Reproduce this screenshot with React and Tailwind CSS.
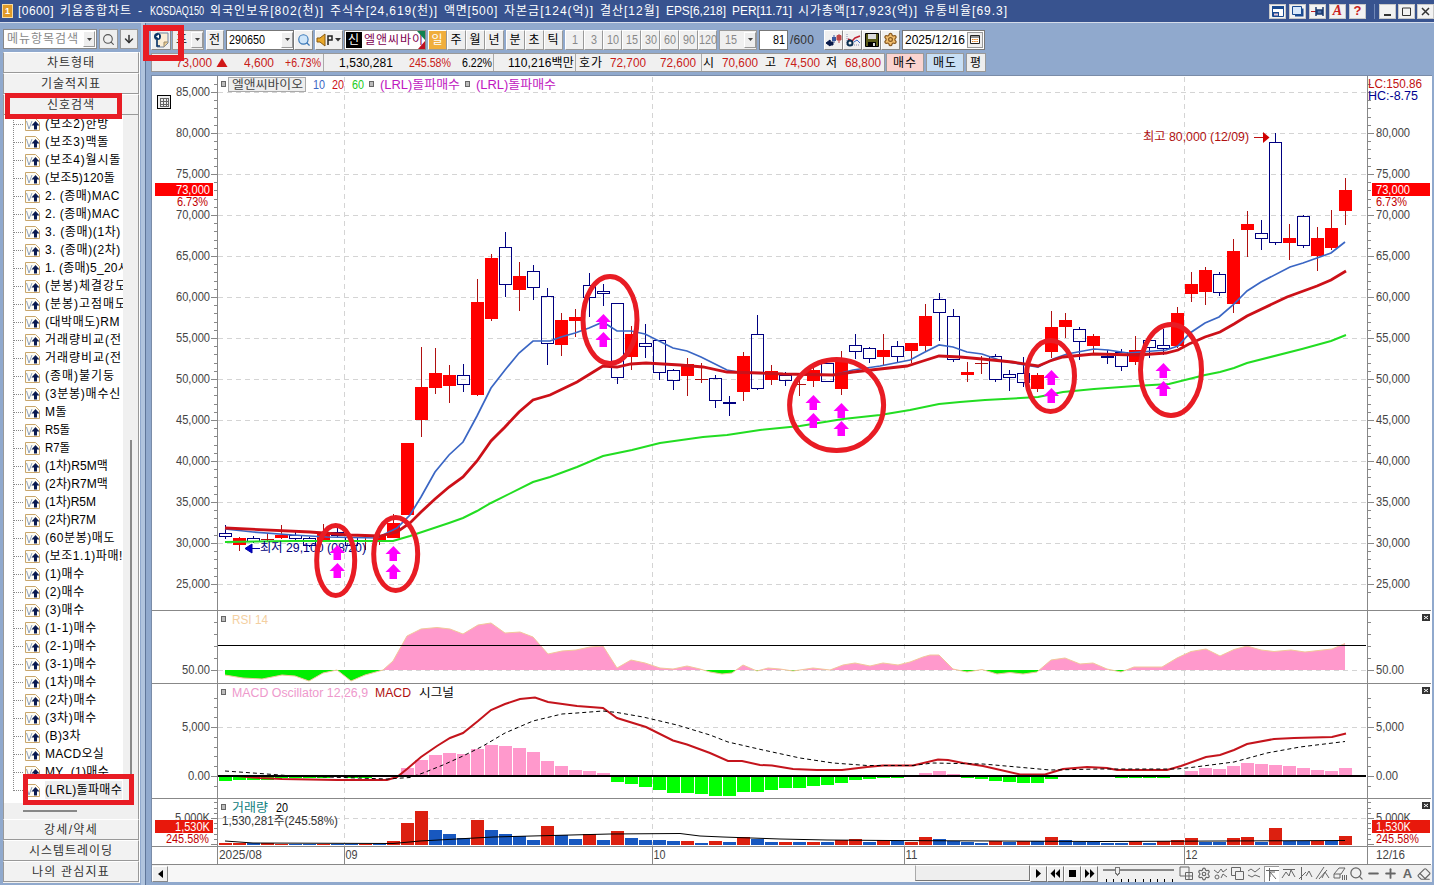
import React, { useLayoutEffect, useRef } from 'react';
import { Search, ArrowDown, Settings, Minus, Plus, Eraser } from 'lucide-react';

const FONT = "font-['Liberation_Sans','Noto_Sans_CJK_KR',sans-serif]";

// fixed pitch: 12px for hangul, 6px for everything else
const gridWidth = (text) => [...text].reduce((sum, c) => sum + (c > '\u1100' ? 12 : 6), 0);

const NARROW = { '(': 5, ')': 5, '.': 4, ',': 4, ' ': 4, '!': 4, M: 10, A: 8, B: 8, C: 9, D: 8, R: 7, L: 6, Y: 8 };
const listWidth = (text) => [...text].reduce((sum, c) => sum + (c > '\u1100' ? 12 : NARROW[c] || 6), 0);

// Makes the text take exactly `width` pixels: letters are spread when there is room, squeezed when not
const Fit = ({ text, width = gridWidth(text), className = '' }) => {
  const ref = useRef(null);
  useLayoutEffect(() => {
    const el = ref.current;
    el.style.letterSpacing = '0px';
    el.style.transform = 'none';
    el.style.width = 'auto';
    const natural = el.getBoundingClientRect().width;
    if (natural > width) {
      el.style.transform = `scaleX(${width / natural})`;
      el.style.marginRight = `${width - natural}px`;
    } else {
      el.style.letterSpacing = `${(width - natural) / [...text].length}px`;
    }
  }, [text, width]);
  return <span ref={ref} className={`inline-block shrink-0 origin-left whitespace-pre ${className}`}>{text}</span>;
};

const TITLE = '[0600] 키움종합차트 - KOSDAQ150 외국인보유[802(천)] 주식수[24,619(천)] 액면[500] 자본금[124(억)] 결산[12월] EPS[6,218] PER[11.71] 시가총액[17,923(억)] 유통비율[69.3]';

const SIGNALS = [
  '(보조2)한방', '(보조3)맥돌', '(보조4)월시돌', '(보조5)120돌', '2. (종매)MAC', '2. (종매)MAC',
  '3. (종매)(1차)', '3. (종매)(2차)', '1. (종매)5_20시', '(분봉)체결강도', '(분봉)고점매도', '(대박매도)RM',
  '거래량비교(전', '거래량비교(전', '(종매)불기둥', '(3분봉)매수신', 'M돌', 'R5돌', 'R7돌', '(1차)R5M맥',
  '(2차)R7M맥', '(1차)R5M', '(2차)R7M', '(60분봉)매도', '(보조1.1)파매!', '(1)매수', '(2)매수', '(3)매수',
  '(1-1)매수', '(2-1)매수', '(3-1)매수', '(1차)매수', '(2차)매수', '(3차)매수', '(B)3차', 'MACD오실',
  'MY_(1)매수', '(LRL)돌파매수',
];

// [up/down, high, body top, body bottom, low] in chart pixels
const CANDLES = [
  ['b', 525, 533, 536, 539], ['r', 537, 538, 545, 551], ['b', 536, 538, 541, 543], ['r', 533, 539, 540, 541],
  ['r', 525, 535, 538, 539], ['b', 532, 535, 538, 541], ['b', 537, 538, 545, 547], ['r', 524, 533, 542, 542],
  ['b', 528, 532, 535, 537], ['b', 535, 537, 545, 547], ['r', 537, 541, 542, 550], ['r', 533, 535, 541, 545],
  ['r', 514, 523, 538, 538], ['r', 443, 443, 515, 515], ['r', 347, 387, 420, 437], ['r', 348, 373, 388, 394],
  ['r', 365, 375, 386, 403], ['b', 364, 375, 384, 392], ['r', 279, 302, 395, 396], ['r', 254, 258, 319, 321],
  ['b', 232, 247, 284, 297], ['r', 262, 276, 290, 311], ['b', 265, 271, 287, 300], ['b', 288, 296, 343, 365],
  ['r', 313, 320, 345, 356], ['r', 309, 317, 321, 337], ['b', 273, 285, 297, 317], ['b', 284, 291, 293, 306],
  ['b', 303, 303, 377, 384], ['r', 326, 334, 357, 370], ['b', 324, 343, 346, 358], ['b', 340, 340, 372, 380],
  ['b', 369, 370, 380, 390], ['r', 358, 364, 376, 396], ['r', 363, 379, 380, 383], ['b', 375, 378, 400, 408],
  ['b', 396, 402, 403, 416], ['r', 352, 356, 392, 401], ['b', 315, 334, 388, 390], ['r', 365, 371, 380, 385],
  ['b', 372, 375, 380, 386], ['r', 377, 384, 385, 396], ['r', 368, 370, 381, 387], ['b', 363, 363, 381, 381],
  ['r', 351, 361, 389, 395], ['b', 334, 345, 351, 359], ['b', 347, 348, 358, 363], ['r', 334, 350, 357, 365],
  ['b', 341, 346, 356, 362], ['r', 343, 343, 351, 363], ['r', 304, 316, 346, 351], ['b', 293, 299, 312, 341],
  ['b', 309, 316, 359, 362], ['r', 362, 372, 375, 382], ['r', 356, 363, 364, 374], ['b', 354, 356, 379, 382],
  ['b', 370, 374, 377, 391], ['b', 357, 373, 382, 387], ['r', 373, 375, 389, 392], ['r', 311, 327, 352, 358],
  ['r', 313, 320, 327, 338], ['b', 327, 329, 341, 360], ['r', 334, 336, 346, 354], ['b', 350, 356, 357, 364],
  ['b', 349, 352, 366, 371], ['r', 336, 350, 362, 365], ['b', 340, 340, 347, 358], ['b', 329, 345, 348, 355],
  ['r', 307, 313, 346, 348], ['r', 272, 284, 294, 302], ['r', 267, 270, 292, 305], ['b', 272, 274, 292, 296],
  ['r', 239, 251, 304, 313], ['r', 211, 224, 230, 257], ['b', 220, 233, 238, 250], ['b', 133, 142, 242, 245],
  ['r', 224, 238, 243, 260], ['b', 215, 216, 245, 248], ['r', 227, 238, 256, 271], ['r', 210, 228, 248, 250],
  ['r', 178, 190, 211, 225],
];

const MA10 = '225,529 253,532 293,535 327,537 377,538 397,528 410,515 421,497 435,472 449,455 463,442 477,416 491,388 505,370 519,353 533,341 550,341 561,337 575,333 589,328 603,322 617,331 631,331 645,334 673,348 687,351 701,357 727,370 743,373 799,374 833,375 853,370 880,366 910,360 925,352 939,345 953,347 967,352 982,354 1002,361 1038,367 1053,359 1067,354 1094,349 1108,350 1128,353 1166,350 1178,346 1190,333 1205,323 1219,317 1233,305 1247,291 1261,282 1290,267 1303,263 1317,258 1331,253 1345,242';
const MA20 = '225,528 310,532 350,535 380,536 397,532 410,523 421,512 435,499 449,487 463,477 477,461 491,441 505,427 519,412 533,400 550,395 577,382 603,366 617,367 631,364 646,363 680,365 703,367 727,372 760,373 783,374 833,375 853,372 907,366 923,361 939,356 960,357 982,359 1012,362 1038,366 1050,361 1063,357 1094,354 1138,355 1166,353 1178,350 1189,344 1205,337 1220,332 1234,324 1247,316 1287,297 1317,286 1331,280 1346,271';
const MA60 = '225,542 293,541 393,541 410,536 449,523 463,518 477,511 491,503 533,482 550,477 577,467 603,456 632,450 660,443 703,437 727,435 760,430 800,426 843,419 880,415 910,410 939,404 960,402 985,400 1038,397 1063,392 1094,389 1135,386 1169,384 1205,375 1220,372 1234,368 1247,363 1302,349 1331,341 1346,335';

const RSI = '225,675 243,678 262,679 282,675 295,676 309,681 323,673 337,670 351,681 365,675 383,670 393,661 407,636 421,629 437,627.5 450,629 463,634 478,625 491,623 505,633 520,632 533,637 548,654 562,651 576,650 590,647 603,646 617,668 631,660 645,663 660,668 673,669 687,666 700,669 710,672 722,674 732,673 743,665 757,671 768,668 780,669 793,671 813,668 830,670 843,665 855,663 870,666 883,663 898,665 910,662 923,657 930,655 939,655 953,669 967,672 982,669.5 997,674 1010,672.5 1023,674 1037,672 1051,660 1065,658 1080,664 1093,663 1107,669 1121,672 1134,667 1162,667 1177,658 1191,651.5 1206,649 1220,656 1234,649.5 1247,646 1261,650 1274,651.5 1291,650 1305,652 1332,649 1345,643.5';
const MACD = '225,776 237,776 260,778 282,779 337,780 387,780 397,777 407,769 421,757 437,746 450,738 463,733 478,721 491,710 505,704 520,699 535,697.5 548,702 577,706 603,708 617,718 646,727 673,740.5 687,744.5 710,753 728,761 742,761 760,765 772,765.5 793,769 817,770 842,770 867,767 883,765.5 913,765.5 938,759.5 948,760 963,763 983,766 1020,774.5 1045,774.5 1063,769 1087,767 1107,768 1117,770 1167,770 1181,766 1206,757 1220,755 1234,750 1247,744 1274,739 1294,738 1332,737 1346,733.5';
const SIGNAL = '225,771 260,773.5 293,776 327,777 387,779 410,777.5 423,773 443,765 463,756 483,746 505,733 533,721 562,714 577,713 603,711 617,712.5 643,717 677,725 710,735 728,742 763,750 800,758 833,763 867,765.5 913,765.5 933,763 983,764 1017,767 1050,770 1100,769 1177,769 1191,767.5 1234,762 1267,753 1300,747 1345,741.5';
const VOLUME_MA = '225,841 253,843 393,843.5 420,841 493,837 610,834 680,833.5 700,836 723,837 780,839 827,840 890,840.5 1100,841.5 1345,840.5';

const OSCILLATOR = [
  -5, -4, -4, -4, -2, -2, -2, -2, -1, -2, -2, -1, 0, 8, 16, 21, 23, 22, 27, 31, 30, 28, 24, 15, 10, 6, 5, 3, -6, -8,
  -11, -14, -17, -17, -18, -20, -20, -16, -16, -14, -12, -12, -10, -9, -7, -4, -3, -2, -2, 0, 3, 5, 2, -2, -3, -5,
  -6, -7, -7, -3, 0, 1, 1, 0, -2, -2, -2, -2, 1, 5, 8, 7, 10, 13, 12, 11, 10, 8, 6, 5, 8,
];

const VOLUME = (
  'r2 r2 b2 r2 r1 b1 b1 r1 b1 b1 r1 b1 r4 r22 r34 b15 b11 b7 r25 b15 b11 b9 b5 r19 b10 b6 r11 b5 r14 b7 b5 b5 b4 r4 b2 ' +
  'r4 b3 r8 b6 b3 r3 b3 r3 b3 r5 r6 b3 r5 b4 r3 r8 b6 b4 b3 b2 r4 b3 r4 b4 r8 b5 b3 b3 b2 b2 r4 b2 r4 r5 r7 b3 b3 ' +
  'r7 r8 b3 r17 b4 b4 r4 b4 r9'
).split(' ').map((v) => ({ up: v[0] === 'r', h: Number(v.slice(1)) }));

const BUY_ARROWS = [[337, 545], [393, 546], [603, 314], [813, 395], [841, 403], [1051, 370], [1163, 363]];
const CIRCLES = [
  [335.7, 560.5, 19, 35], [395.7, 554, 22, 36.5], [610, 320, 27, 43.5],
  [836.6, 405, 47, 45.5], [1050.5, 376, 24, 35.5], [1171, 370, 30.5, 45.5],
];
const MONTHS = [[344.5, '09'], [652.5, '10'], [904.5, '11'], [1184.5, '12']];

const candleX = (i) => 225 + i * 14;

const T = ({ x, y, w, fill = '#444', end, children }) => (
  <text x={x} y={y} fill={fill} textLength={w} lengthAdjust="spacingAndGlyphs" textAnchor={end ? 'end' : 'start'}>
    {children}
  </text>
);

const Candle = ({ data, i }) => {
  const [type, high, top, bottom, low] = data;
  const x = candleX(i);
  const flat = bottom - top <= 1;
  if (type === 'r') {
    return (
      <g>
        <path d={`M${x + 0.5} ${high}V${low}`} stroke="#b01010" />
        <rect x={x - 6} y={top} width="13" height={bottom - top} fill={flat ? '#b01010' : '#ff0000'} />
      </g>
    );
  }
  return (
    <g stroke="#000080">
      <path d={`M${x + 0.5} ${high}V${top}M${x + 0.5} ${bottom}V${low}`} />
      <rect x={x - 5.5} y={top + 0.5} width="12" height={flat ? 0.5 : bottom - top} fill="none" />
    </g>
  );
};

const CloseMark = ({ y }) => (
  <g>
    <rect x="1422" y={y} width="8" height="7" fill="#333" />
    <path d={`M1424 ${y + 2}l4 3m0 -3l-4 3`} stroke="#fff" />
  </g>
);

const Bullet = ({ x, y }) => <rect x={x + 0.5} y={y + 0.5} width="4" height="5" fill="#bbb" stroke="#666" />;

const axisTicks = () => {
  let d = '';
  const add = (y, major) => {
    const len = major ? 6 : 3;
    d += `M${217 - len} ${y}h${len}M1368 ${y}h${len}`;
  };
  for (let k = 0; k <= 62; k++) {
    const y = Math.round(92 + (k - 1) * 8.2) + 0.5;
    if (y < 608) add(y, (k - 1) % 5 === 0);
  }
  for (let k = 0; k < 5; k++) add(622.5 + k * 12, k === 4);
  for (let k = -1; k < 9; k++) add(Math.round(776 - k * 9.8) + 0.5, k === 0 || k === 5);
  for (let k = 0; k < 9; k++) add(844.5 - k * 5.2, k === 0 || k === 5);
  return d;
};

const PriceAxis = ({ right }) => {
  const x = right ? 1376 : 210;
  const end = !right;
  const prices = [];
  for (let p = 85; p >= 25; p -= 5) {
    if (!(right && p === 85)) prices.push(p);
  }
  return (
    <g>
      {prices.map((p) => (
        <T key={p} x={x} y={96 + ((85 - p) / 5) * 41} w={34} end={end}>{`${p},000`}</T>
      ))}
      <rect x={right ? 1372 : 155} y="183" width="58" height="13" fill="#ff0000" />
      <T x={x} y={194} w={34} fill="#fff" end={end}>73,000</T>
      <T x={right ? x : 208} y={206} w={31} fill="#c00000" end={end}>6.73%</T>
      <T x={x} y={674} w={28} end={end}>50.00</T>
      <T x={x} y={731} w={28} end={end}>5,000</T>
      <T x={x} y={780} w={22} end={end}>0.00</T>
      <T x={x} y={822} w={35} end={end}>5,000K</T>
      <rect x={right ? 1372 : 155} y="820" width="58" height="13" fill="#e8180c" />
      <T x={x} y={831} w={35} fill="#fff" end={end}>1,530K</T>
      <T x={right ? x : 209} y={843} w={43} fill="#c00000" end={end}>245.58%</T>
    </g>
  );
};

const Chart = () => (
  <svg
    width="1280"
    height="789"
    viewBox="152 76 1280 789"
    className={`block bg-white text-[12px] ${FONT}`}
    fill="none"
  >
    <defs>
      <clipPath id="above"><rect x="218" y="612" width="1150" height="58" /></clipPath>
      <clipPath id="below"><rect x="218" y="670" width="1150" height="13" /></clipPath>
    </defs>

    <g shapeRendering="crispEdges">
      <g stroke="#d4d4d4" strokeDasharray="5 4">
        {Array.from({ length: 13 }, (_, k) => (
          <path key={k} d={`M218 ${92.5 + k * 41}H1367`} />
        ))}
        <path d="M218 670.5H1367M218 727.5H1367M218 818.5H1367" />
        {MONTHS.map(([x]) => <path key={x} d={`M${x} 77V846`} />)}
      </g>
      <path d="M217.5 76V865M1367.5 76V865" stroke="#888" />
      <path d={axisTicks()} stroke="#888" />
      <path d="M152 610.5H1431M152 683.5H1431M152 798.5H1431M152 846.5H1431M152 864.5H1431" stroke="#888" />
      {MONTHS.map(([x]) => <path key={x} d={`M${x} 847V864`} stroke="#888" />)}
    </g>

    {/* price */}
    <g shapeRendering="crispEdges">
      {CANDLES.map((c, i) => <Candle key={i} data={c} i={i} />)}
    </g>
    <polyline points={MA60} stroke="#22dd22" strokeWidth="2" />
    <polyline points={MA10} stroke="#3a66c4" strokeWidth="1.7" />
    <polyline points={MA20} stroke="#cc1018" strokeWidth="2.8" />
    <path d="M245 548.5l7-4.500v9zM252 548.500h8" fill="#0000cc" stroke="#0000a0" />
    <T x={260} y={552} w={106} fill="#000080">최저 29,100 (08/20)</T>
    <T x={1143} y={141} w={106} fill="#b01010">최고 80,000 (12/09)</T>
    <path d="M1254 137.500h10" stroke="#c01010" />
    <path d="M1263 132l6.500 5.500l-6.500 5.500z" fill="#d00000" />
    {BUY_ARROWS.map(([x, y]) => [0, 18].map((dy) => (
      <path
        key={`${x}-${dy}`}
        d={`M${x + 0.5} ${y + dy}l7.500 8h-4v7h-7.500v-7h-4z`}
        fill="#ff00ff"
      />
    )))}
    {CIRCLES.map(([cx, cy, rx, ry]) => (
      <ellipse key={cx} cx={cx} cy={cy} rx={rx} ry={ry} stroke="#e81c24" strokeWidth="5" />
    ))}

    <Bullet x={221} y={81} />
    <rect x="228.500" y="77.500" width="77" height="14" fill="#eee" stroke="#aaa" />
    <T x={232} y={89} w={71}>엘앤씨바이오</T>
    <T x={313} y={89} w={12} fill="#3a66c4">10</T>
    <T x={332} y={89} w={12} fill="#cc1018">20</T>
    <T x={352} y={89} w={12} fill="#22cc22">60</T>
    <Bullet x={369} y={81} />
    <T x={380} y={89} w={80} fill="#c018c0">(LRL)돌파매수</T>
    <Bullet x={465} y={81} />
    <T x={476} y={89} w={80} fill="#c018c0">(LRL)돌파매수</T>
    <g shapeRendering="crispEdges">
      <rect x="157.500" y="95.500" width="13" height="13" fill="#eee" stroke="#000" />
      <path d="M160.500 98.500h8v8h-8zM160.500 101.500h8M163.500 98.500v8M166.500 98.500v8M160.500 104.500h8" stroke="#666" />
    </g>

    {/* rsi */}
    <polygon points={`225,670 ${RSI} 1345,670`} fill="#ff99cc" clipPath="url(#above)" />
    <polygon points={`225,670 ${RSI} 1345,670`} fill="#00ee00" clipPath="url(#below)" />
    <polyline points={RSI} stroke="#f2c79a" />
    <path d="M218 645.500H1366" stroke="#000" shapeRendering="crispEdges" />
    <Bullet x={221} y={616} />
    <T x={232} y={624} w={36} fill="#f4cfa0">RSI 14</T>

    {/* macd */}
    <g shapeRendering="crispEdges">
      {OSCILLATOR.map((v, i) => (
        <rect
          key={i}
          x={candleX(i) - 6}
          y={v > 0 ? 776 - v : 776}
          width="13"
          height={Math.abs(v)}
          fill={v > 0 ? '#ff99cc' : '#00ff00'}
        />
      ))}
    </g>
    <polyline points={MACD} stroke="#c4141c" strokeWidth="2" />
    <polyline points={SIGNAL} stroke="#000" strokeDasharray="4 3" />
    <path d="M218 776H1366" stroke="#000" strokeWidth="2" shapeRendering="crispEdges" />
    <Bullet x={221} y={689} />
    <T x={232} y={697} w={136} fill="#ee99cc">MACD Oscillator 12,26,9</T>
    <T x={375} y={697} w={36} fill="#b01010">MACD</T>
    <T x={419} y={697} w={35} fill="#000">시그널</T>

    {/* volume */}
    <g shapeRendering="crispEdges">
      {VOLUME.map(({ up, h }, i) => (
        <rect key={i} x={candleX(i) - 6} y={845 - h} width="13" height={h} fill={up ? '#dc2010' : '#1858c0'} />
      ))}
    </g>
    <polyline points={VOLUME_MA} stroke="#000" />
    <Bullet x={221} y={804} />
    <T x={232} y={812} w={36} fill="#108080">거래량</T>
    <T x={276} y={812} w={12} fill="#000">20</T>
    <T x={222} y={825} w={116} fill="#333">1,530,281주(245.58%)</T>

    <PriceAxis />
    <PriceAxis right />
    <T x={1368} y={88} w={54} fill="#c01010">LC:150.86</T>
    <T x={1368} y={100} w={50} fill="#000090">HC:-8.75</T>
    <CloseMark y={614} />
    <CloseMark y={687} />
    <CloseMark y={802} />
    <T x={219} y={859} w={43}>2025/08</T>
    {MONTHS.map(([x, label]) => <T key={label} x={x + 1} y={859} w={12}>{label}</T>)}
    <T x={1376} y={859} w={29}>12/16</T>
  </svg>
);

const SignalIcon = () => (
  <svg width="16" height="14" viewBox="0 0 16 14" className="shrink-0">
    <path d="M.5 1.500h10l4 4v8H.5z" fill="#fffdf5" stroke="#c9a66b" />
    <path d="M1.500 4l2.500 8 3-8" fill="none" stroke="#8fa3bf" />
    <path d="M10.500 4l4 4.500h-2.500v4H9v-4H6.500z" fill="#0a1a50" />
  </svg>
);

const DropArrow = ({ className = '' }) => (
  <span className={`flex h-4 w-3 shrink-0 items-center justify-center border border-[#999] border-t-white border-l-white bg-[#eee] ${className}`}>
    <svg width="5" height="3"><path d="M0 0h5L2.500 3z" fill="#444" /></svg>
  </span>
);

const MenuButton = ({ label }) => (
  <button className="flex h-[21px] w-full shrink-0 items-center justify-center border border-[#999] border-t-white bg-[#f2f2f2] text-[#333]">
    <Fit text={label} />
  </button>
);

const Sidebar = () => (
  <aside className="flex h-full w-[141px] shrink-0 flex-col pl-[3px]">
    <div className="flex h-[29px] items-start gap-[2px] pt-[6px]">
      <div className="flex h-[20px] w-[94px] items-center justify-between border border-[#888] bg-white pr-px pl-[3px] text-[#888]">
        <Fit text="메뉴항목검색" />
        <DropArrow />
      </div>
      <button className="flex h-[20px] w-[19px] items-center justify-center border border-[#999] bg-[#eee]">
        <Search size={13} color="#555" />
      </button>
      <button className="flex h-[20px] w-[18px] items-center justify-center border border-[#999] bg-[#eee]">
        <ArrowDown size={12} color="#333" strokeWidth={3} />
      </button>
    </div>
    <div className="flex h-[831px] w-[137px] flex-col border-r border-white bg-[#f0f0f0]">
      <MenuButton label="차트형태" />
      <MenuButton label="기술적지표" />
      <MenuButton label="신호검색" />
      <div className="flex h-[688px] overflow-hidden border-x border-[#999] bg-white">
        <div className="flex w-[119px] flex-col overflow-hidden pl-[9px]">
          <ul className="h-[676px] border-l border-dotted border-[#888]">
            {SIGNALS.map((name, i) => (
              <li key={i} className="flex h-[18px] w-[110px] items-center overflow-hidden text-black">
                <span className="mr-[2px] w-[9px] shrink-0 border-t border-dotted border-[#888]" />
                <SignalIcon />
                <span className={`ml-1 flex h-[18px] shrink-0 items-center ${i === 37 ? 'bg-[#eee]' : ''}`}>
                  <Fit text={name} width={listWidth(name)} />
                </span>
              </li>
            ))}
          </ul>
        </div>
        <div className="flex flex-1 justify-center bg-[#f0f0f0] pt-[325px]">
          <div className="h-[342px] w-[2px] bg-[#888]" />
        </div>
      </div>
      <div className="h-4 shrink-0 border-x border-[#999] pt-[7px] pl-[19px]">
        <div className="h-[2px] w-[54px] bg-[#888]" />
      </div>
      <MenuButton label="강세/약세" />
      <MenuButton label="시스템트레이딩" />
      <MenuButton label="나의 관심지표" />
    </div>
  </aside>
);

const Cell = ({ text, className = '' }) => (
  <span className={`flex h-5 shrink-0 items-center justify-center border border-[#999] border-t-white border-l-white ${className}`}>
    <Fit text={text} />
  </span>
);

const IconBox = ({ className = '', children }) => (
  <span className={`flex h-5 shrink-0 items-center justify-center border border-[#888] border-t-white border-l-white bg-[#f0f0f0] ${className}`}>
    {children}
  </span>
);

const Toolbar = () => (
  <div className="flex h-[21px] items-center text-black">
    <IconBox className="w-[20px]">
      <svg width="16" height="16" viewBox="0 0 16 16">
        <path d="M4 1h11v10l-4 4H4z" fill="#fbeed6" stroke="#6f83a0" />
        <path d="M15 10h-4v5" fill="#e7c991" stroke="#9b8b6b" />
        <circle cx="4.500" cy="4.500" r="3.500" fill="#0a3468" />
        <path d="M3 4.500l3-2v4z" fill="#fff" />
        <path d="M4 8v6h3" fill="none" stroke="#0a3468" strokeWidth="1.500" />
      </svg>
    </IconBox>
    <div className="mr-[2px] ml-px flex h-5 w-8 items-center justify-between border border-[#999] bg-[#eee] pl-[3px]">
      <Fit text="프" />
      <DropArrow />
    </div>
    <Cell text="전" className="mr-[2px] w-[18px] bg-[#eee]" />
    <div className="flex h-5 w-[68px] items-center justify-between border border-[#777] bg-white pl-[2px]">
      <Fit text="290650" />
      <DropArrow />
    </div>
    <IconBox className="mr-[2px] w-[19px]">
      <Search size={14} color="#3a78b8" fill="#cfe6fa" />
    </IconBox>
    <IconBox className="mr-px w-[28px]">
      <svg width="26" height="14" viewBox="0 0 26 14">
        <path d="M1 5h3l5-4v12L4 9H1z" fill="#e8a82a" stroke="#8a5a10" />
        <path d="M12 3h4v4h-4zM12 3v9" fill="none" stroke="#222" strokeWidth="1.500" />
        <path d="M19 5h6l-3 3.500z" fill="#333" />
      </svg>
    </IconBox>
    <div className="relative mr-[2px] flex h-5 w-[82px] items-center gap-[2px] overflow-hidden border border-[#888] bg-white pl-[1px] text-[#800050]">
      <span className="flex h-4 w-4 shrink-0 items-center justify-center bg-black text-white">
        <Fit text="신" />
      </span>
      <Fit text="엘앤씨바이오" />
      <svg width="8" height="18" className="absolute top-0 right-0">
        <path d="M0 0h8v9z" fill="#108050" />
        <path d="M8 10v8H1z" fill="#c01020" />
      </svg>
    </div>
    <Cell text="일" className="w-[19px] bg-[#f0ae3c] text-white" />
    <Cell text="주" className="w-[19px] bg-[#eee]" />
    <Cell text="월" className="w-[19px] bg-[#eee]" />
    <Cell text="년" className="mr-[2px] w-[19px] bg-[#eee]" />
    <Cell text="분" className="w-[19px] bg-[#eee]" />
    <Cell text="초" className="w-[19px] bg-[#eee]" />
    <Cell text="틱" className="mr-[2px] w-[19px] bg-[#eee]" />
    {['1', '3', '10', '15', '30', '60', '90', '120'].map((n) => (
      <Cell key={n} text={n} className="w-[19px] bg-[#f0f0f0] text-[#888]" />
    ))}
    <div className="mx-[2px] flex h-5 w-[38px] items-center justify-between border border-[#999] bg-[#f0f0f0] pl-[5px] text-[#888]">
      <Fit text="15" />
      <DropArrow />
    </div>
    <div className="flex h-5 w-[29px] items-center justify-end border border-[#777] bg-white pr-[2px]">
      <Fit text="81" />
    </div>
    <span className="w-9 pl-[2px] text-[#333]"><Fit text="/600" /></span>
    <IconBox className="w-[19px]">
      <svg width="16" height="14" viewBox="0 0 16 14">
        <path d="M4 7v6M0 10l4-3v6zM3 9h4v3H3z" fill="#0a1a4a" stroke="#0a1a4a" />
        <path d="M8 2v8" stroke="#3a5aa0" />
        <path d="M6 4h4v4H6z" fill="#3a5aa0" />
        <path d="M13 1v9M11 2.500h4v4.500h-4z" fill="#c04848" stroke="#c04848" />
      </svg>
    </IconBox>
    <IconBox className="w-[19px]">
      <svg width="16" height="14" viewBox="0 0 16 14" fill="none">
        <path d="M2 1v11h13" stroke="#88a" strokeDasharray="1 1" />
        <path d="M3 6l4 2 3-3 5-2" stroke="#c02030" strokeWidth="1.500" />
        <circle cx="5" cy="10" r="2.500" stroke="#0a3050" strokeWidth="2" />
        <path d="M9 9l3-2 3 3" stroke="#3a66c4" />
      </svg>
    </IconBox>
    <IconBox className="w-[19px]">
      <svg width="14" height="14" viewBox="0 0 14 14">
        <path d="M.5.500h13v13H.5z" fill="#5a5a18" stroke="#000" />
        <path d="M3 1h8v5H3z" fill="#ddd" />
        <path d="M3 9h8v5H3z" fill="#000" />
        <path d="M8 10h2v3H8z" fill="#ddd" />
      </svg>
    </IconBox>
    <IconBox className="mr-[2px] w-[19px]">
      <Settings size={15} color="#8a5a20" fill="#f4c070" />
    </IconBox>
    <div className="flex h-5 w-[83px] items-center justify-between border border-[#777] bg-white pr-px pl-[2px]">
      <Fit text="2025/12/16" />
      <span className="flex h-4 w-4 items-center justify-center border border-[#999] bg-[#eee]">
        <svg width="10" height="9" viewBox="0 0 10 9">
          <path d="M.5.500h9v8h-9zM0 2h10" fill="#fff" stroke="#222" />
          <path d="M2 4.500h6M2 6.500h6" stroke="#e08020" strokeDasharray="1.500 .7" />
        </svg>
      </span>
    </div>
  </div>
);

const Quote = ({ text, className }) => (
  <span className={`flex h-full shrink-0 items-center justify-end ${className}`}><Fit text={text} /></span>
);

const QuoteBar = () => (
  <div className="flex h-[19px] items-center text-black">
    <div className="flex h-[19px] w-[734px] items-center border border-[#999] bg-[#f0f0f0]">
      <Quote text="73,000" className="w-[60px] text-[#c82018]" />
      <svg width="20" height="9" className="shrink-0"><path d="M10 0l5.500 9h-11z" fill="#d01818" /></svg>
      <Quote text="4,600" className="w-[42px] text-[#c82018]" />
      <Quote text="+6.73%" className="w-[50px] border-r border-[#aaa] pr-[2px] text-[#c82018]" />
      <Quote text="1,530,281" className="w-[69px]" />
      <Quote text="245.58%" className="w-[58px] text-[#c82018]" />
      <Quote text="6.22%" className="w-[43px] border-r border-[#aaa] pr-px" />
      <Quote text="110,216백만" className="w-[82px] border-r border-[#aaa] pr-px" />
      <Quote text="호가" className="w-[27px]" />
      <Quote text="72,700" className="w-[43px] text-[#c82018]" />
      <Quote text="72,600" className="w-[56px] border-r border-[#aaa] pr-[5px] text-[#c82018]" />
      <Quote text="시" className="w-[13px]" />
      <Quote text="70,600" className="w-[43px] text-[#c82018]" />
      <Quote text="고" className="w-[19px]" />
      <Quote text="74,500" className="w-[43px] text-[#c82018]" />
      <Quote text="저" className="w-[18px]" />
      <Quote text="68,800" className="w-[43px] text-[#c82018]" />
    </div>
    <span className="ml-px flex h-[19px] w-[38px] items-center justify-center border border-[#999] bg-[#fad4d0]"><Fit text="매수" /></span>
    <span className="ml-[2px] flex h-[19px] w-[38px] items-center justify-center border border-[#999] bg-[#c8dff5]"><Fit text="매도" /></span>
    <span className="ml-[2px] flex h-[19px] w-[20px] items-center justify-center border border-[#999] bg-[#eee]"><Fit text="평" /></span>
  </div>
);

const PLAY_ICONS = ['M5 3l5 4.500-5 4.500z', 'M7 3v9L2.500 7.500zM12 3v9L7.500 7.500z', 'M4 4h7v7H4z', 'M3 3v9l4.500-4.500zM8 3v9l4.500-4.500z'];

const TOOL_ICONS = [
  'M6 10H1V1h9v5M6.500 6.500h7v7h-7zM10 6.500v7M6.500 10h7',
  null,
  'M1 4l4 3 3-4 2 3 4-3M8 12l2-4 4 3M6 11a2 2 0 1 1-4 0a2 2 0 1 1 4 0',
  'M5 9.500H1.500v-8h9v4M5.500 5.500h8v8h-8z',
  'M1 5l3-2 4 3 5-4M1 9l4 2 3-2 5 2',
  'M1 3.500h13M4.500 1v13M5 5l6 7M5 5h5M5 5v5',
  'M2 3.500h12M1 12l4-6 3 4 2-6 4 7',
  'M3.500 1v13M1 13L8 6M8 10l3-5 3 6',
  'M1 13L9 1M4 13l8-9M7 12l3-6 4 6',
  'M2 8l5-6h6l-4 6zM2 8v4h6V8M10.500 9v5M12.500 9v5M14.500 9v5',
];

const BottomBar = () => (
  <div className="flex h-[17px] w-[1280px] items-center overflow-hidden bg-[#f0f0f0]">
    <span className="flex h-4 w-4 shrink-0 items-center justify-center border border-[#888] border-t-white border-l-white">
      <svg width="5" height="8"><path d="M5 0v8L0 4z" fill="#000" /></svg>
    </span>
    <div className="flex h-full w-[862px] shrink-0 justify-end bg-[#f7f7f7]">
      <div className="h-4 w-[115px] border border-[#777] border-t-white border-l-[#aaa] bg-[#eee]" />
    </div>
    {PLAY_ICONS.map((d) => (
      <span key={d} className="flex h-4 w-[17px] shrink-0 items-center justify-center border border-[#777] border-t-white border-l-white">
        <svg width="15" height="15" className="shrink-0"><path d={d} fill="#000" /></svg>
      </span>
    ))}
    <svg width="76" height="17" className="ml-1 shrink-0" shapeRendering="crispEdges">
      <path d="M1 4.500h71" stroke="#888" strokeWidth="2" />
      <path d="M13.500 2v6l2 2 2-2V2z" fill="#eee" stroke="#777" />
      {Array.from({ length: 10 }, (_, k) => <path key={k} d={`M${4.5 + k * 7.300} 14v3`} stroke="#000" />)}
    </svg>
    <div className="ml-px flex items-center gap-[2px] text-[#666]">
      {TOOL_ICONS.map((d, i) => (
        <span key={i} className={`flex h-4 w-[15px] shrink-0 items-center justify-center ${i === 5 ? 'border-t border-l border-[#999] bg-white' : ''}`}>
          {d ? (
            <svg width="15" height="15" fill="none" stroke="currentColor" className="shrink-0"><path d={d} /></svg>
          ) : (
            <Settings size={14} />
          )}
        </span>
      ))}
      <Search size={15} className="shrink-0" />
      <Minus size={15} strokeWidth={3} className="shrink-0" />
      <Plus size={15} strokeWidth={3} className="shrink-0" />
      <span className="w-[15px] shrink-0 text-center text-[13px] font-bold">A</span>
      <Eraser size={14} className="shrink-0" />
    </div>
  </div>
);

const WindowButton = ({ children, className = '' }) => (
  <span className={`flex h-[15px] w-[17px] shrink-0 items-center justify-center border border-[#c8c8c8] bg-[#f2f2f2] ${className}`}>
    {children}
  </span>
);

const TitleBar = () => (
  <header className="flex h-[23px] items-center border-b border-[#d5dcea] bg-[#38538f] pl-[2px] text-white">
    <span className="mr-[5px] flex h-[14px] w-[11px] items-center justify-center border border-[#f8dca0] bg-[#e09a28] text-[9px] font-bold">1</span>
    <h1 className="flex h-full w-[1260px] items-center gap-[6px]">
      {TITLE.split(' ').map((word, i) => <Fit key={i} text={word} />)}
    </h1>
    <div className="-ml-[8px] flex gap-[3px]">
      <WindowButton>
        <svg width="12" height="11"><path d="M.5.500h11v10H.5z" fill="#fff" stroke="#1a4a90" /><path d="M0 0h12v3H0zM1 6h6v5H1z" fill="#1a4a90" /><path d="M2 7.500h4v2H2z" fill="#e8c8d8" /></svg>
      </WindowButton>
      <WindowButton>
        <svg width="12" height="11"><path d="M3 2.500h8.500v8H3z" fill="#1a4a90" /><path d="M.5.500h9v8h-9z" fill="#d8e8fa" stroke="#1a4a90" /></svg>
      </WindowButton>
      <WindowButton>
        <svg width="14" height="11"><path d="M0 5.500h5" stroke="#c02020" /><path d="M5 1v9M6 4h5v4H6zM12 1v9" fill="#5070a8" stroke="#1a3a70" strokeWidth="1.500" /></svg>
      </WindowButton>
      <WindowButton><span className="font-['Liberation_Serif',serif] text-[14px] font-bold text-[#c82020] italic">A</span></WindowButton>
      <WindowButton><span className="text-[13px] font-bold text-[#c82020]">?</span></WindowButton>
    </div>
    <div className="ml-[8px] flex gap-[2px] border-l border-[#7088b8] pl-[4px]">
      <WindowButton className="w-[15px]"><svg width="9" height="9"><path d="M1 8h7" stroke="#333" strokeWidth="2" /></svg></WindowButton>
      <WindowButton className="w-[15px]"><svg width="9" height="9"><path d="M.5 1h8v7.500h-8z" fill="none" stroke="#333" /></svg></WindowButton>
      <WindowButton className="w-[15px]"><svg width="9" height="9"><path d="M1 1l7 7M8 1L1 8" stroke="#333" strokeWidth="1.500" /></svg></WindowButton>
    </div>
  </header>
);

const App = () => {
  return (
    <div className={`relative h-[885px] w-[1434px] overflow-hidden bg-[#90a9cd] text-[12px] leading-[16px] ${FONT}`}>
      <TitleBar />
      <div className="flex h-[862px]">
        <Sidebar />
        <div className="mr-[5px] h-full w-[5px] shrink-0 border-r border-[#5f7699] bg-[#b0c4de]" />
        <main className="flex flex-col pt-[6px]">
          <Toolbar />
          <div className="h-[3px]" />
          <QuoteBar />
          <div className="mt-[3px] border-t border-l border-[#7a8ca8] bg-white">
            <Chart />
            <BottomBar />
          </div>
        </main>
      </div>

      {/* marker boxes */}
      <div className="absolute top-[25px] left-[143px] h-[36px] w-[41px] border-[6px] border-[#e81c24]" />
      <div className="absolute top-[93px] left-[5px] h-[26px] w-[117px] border-[5px] border-[#e81c24]" />
      <div className="absolute top-[774px] left-[23px] h-[31px] w-[111px] border-[5px] border-[#e81c24]" />
    </div>
  );
};

export default App;
